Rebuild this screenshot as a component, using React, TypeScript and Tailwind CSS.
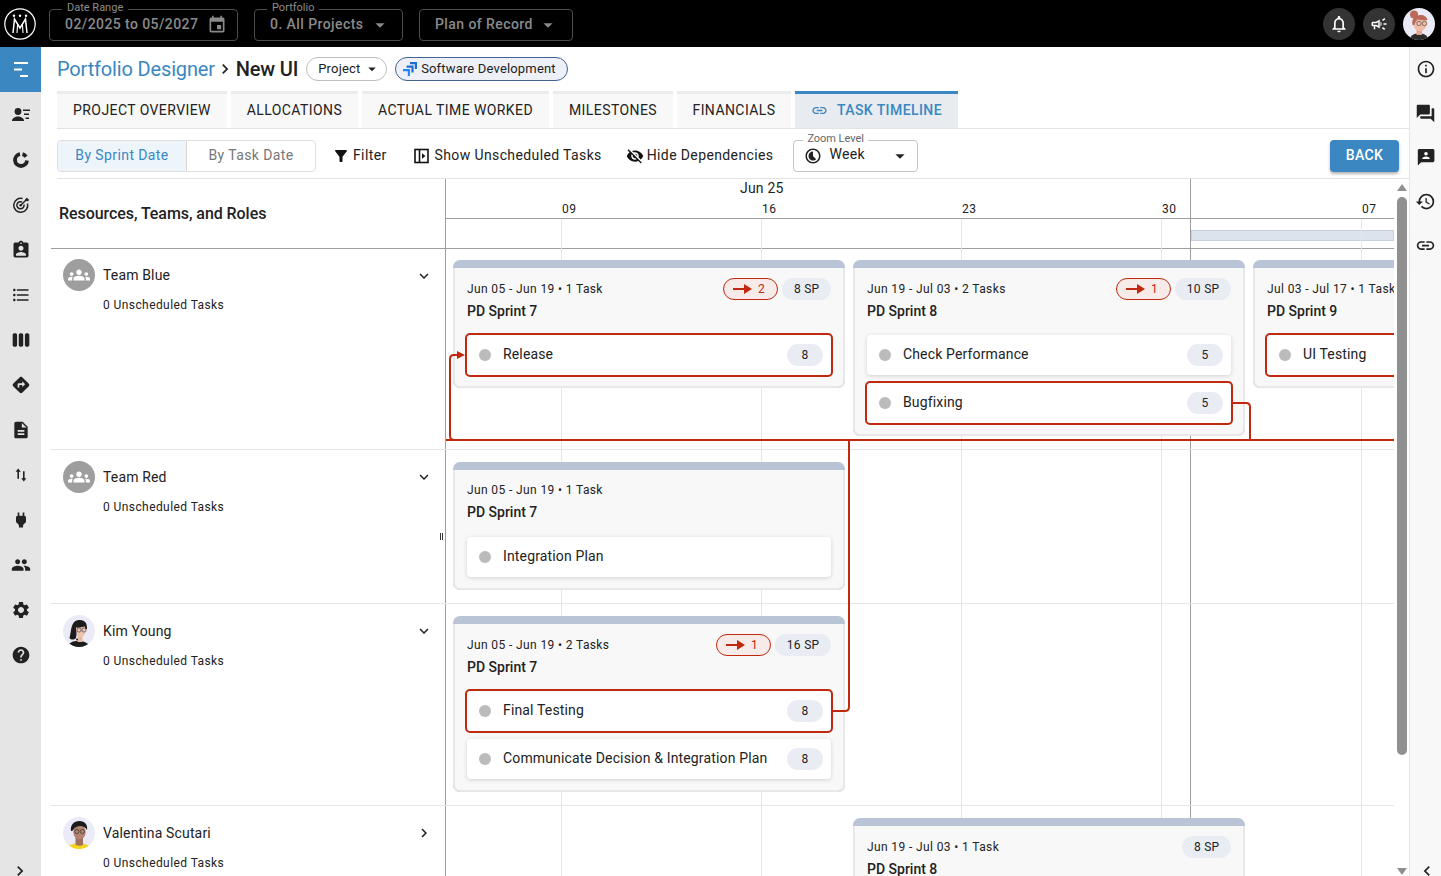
import React from "react";
import {
  MdArrowDropDown, MdEvent, MdNotificationsNone, MdOutlineCampaign, MdOutlineInfo, MdForum, MdHistory, MdLink,
  MdAssignmentInd, MdFormatListBulleted, MdViewWeek, MdDirections, MdDescription,
  MdPower, MdPeople, MdSettings, MdHelp, MdChevronRight, MdChevronLeft, MdFilterAlt, MdVisibilityOff, MdKeyboardArrowDown, MdGroups,
  MdTimelapse,
} from "react-icons/md";

const RED = "#c0280f";

function Logo() {
  return (
    <svg width="32" height="32" viewBox="0 0 32 32" fill="none" stroke="#fff">
      <circle cx="16" cy="16" r="15.2" strokeWidth="1.2" />
      <path d="M9 25 L10.500 11 L16 20 L21.500 11 L23 25" strokeWidth="1.5" />
      <path d="M13 25 L13.600 16 M19 25 L18.400 16" strokeWidth="1.1" />
      <circle cx="10" cy="7.800" r="1.200" fill="#fff" stroke="none" />
      <circle cx="16" cy="7.800" r="1.200" fill="#fff" stroke="none" />
      <circle cx="22" cy="7.800" r="1.200" fill="#fff" stroke="none" />
    </svg>
  );
}

function JiraIcon() {
  return (
    <svg width="16" height="16" viewBox="0 0 16 16" fill="#1c6ed4">
      <path d="M8 1h7v7h-2.200V3.200H8z" />
      <path d="M4.600 4.500h7v7H9.400V6.700H4.600z" fill="#1c6ed4" />
      <path d="M1 8h7v7H5.800V10.200H1z" fill="#2684ff" />
    </svg>
  );
}

function FramesIcon() {
  return (
    <svg width="20" height="20" viewBox="0 0 20 20" fill="none">
      <rect x="3" y="3.500" width="13" height="13" stroke="#111" strokeWidth="1.600" />
      <path d="M7.500 3.500v13" stroke="#111" strokeWidth="1.600" />
      <path d="M10 7.200l3.400 2.800L10 12.800z" fill="#111" />
    </svg>
  );
}

function PersonLines() {
  return (
    <svg width="20" height="20" viewBox="0 0 20 20" fill="#222">
      <circle cx="7" cy="6.500" r="3.400" />
      <path d="M1 16c0-3 3.400-4.600 6-4.600s6 1.600 6 4.600z" />
      <rect x="12" y="4.500" width="7" height="1.500" />
      <rect x="13" y="8.500" width="5" height="1.500" />
      <rect x="14.500" y="12.500" width="3.500" height="1.500" />
    </svg>
  );
}

function Donut() {
  return (
    <svg width="20" height="20" viewBox="0 0 20 20" fill="none" stroke="#222" strokeWidth="3.800">
      <path d="M16 10.500A6 6 0 1 1 9 4.100" />
      <path d="M11.500 4.200A6 6 0 0 1 15 6.700" />
    </svg>
  );
}

function Target() {
  return (
    <svg width="20" height="20" viewBox="0 0 20 20" fill="none" stroke="#222" strokeWidth="1.500">
      <path d="M11.500 3.500A7 7 0 1 0 16.500 8.500" />
      <path d="M11 7A3.600 3.600 0 1 0 13 9.500" />
      <circle cx="9.700" cy="10.300" r="1.300" fill="#222" stroke="none" />
      <path d="M10 10L15.500 4.500" />
      <path d="M14 4.500L16 2.500L17 4L18.500 5L16 6.500Z" fill="#222" stroke="none" />
    </svg>
  );
}

function SwapThin() {
  return (
    <svg width="20" height="20" viewBox="0 0 20 20" fill="#222">
      <path d="M7.200 3.500l2.600 3.200H8v7H6.400v-7H4.600z" />
      <path d="M12.800 16.500l-2.600-3.200H12v-7h1.600v7h1.800z" />
    </svg>
  );
}

function ChatPerson() {
  return (
    <svg width="20" height="20" viewBox="0 0 20 20">
      <path d="M3.400 2h13.400c.9 0 1.600.7 1.600 1.600v10c0 .9-.7 1.600-1.600 1.600H5.200L1.800 18.400V3.600C1.800 2.700 2.500 2 3.400 2z" fill="#222" />
      <circle cx="10" cy="6.800" r="1.800" fill="#fff" />
      <path d="M6.200 12c0-1.600 2.500-2.400 3.800-2.400s3.800.8 3.800 2.400z" fill="#fff" />
    </svg>
  );
}

function MenuLines() {
  return (
    <svg width="14" height="15" viewBox="0 0 14 15" fill="#fff">
      <rect x="0" y="0" width="14" height="2" />
      <rect x="0" y="6.500" width="8" height="2" />
      <rect x="6" y="13" width="8" height="2" />
    </svg>
  );
}

function AvatarRed() {
  return (
    <svg width="32" height="32" viewBox="0 0 32 32">
      <defs><clipPath id="a1"><circle cx="16" cy="16" r="16" /></clipPath></defs>
      <g clipPath="url(#a1)">
        <rect width="32" height="32" fill="#ebebf7" />
        <path d="M7 32c0-5 4-6.500 9-6.500s9 1.500 9 6.500z" fill="#2b2b2b" />
        <rect x="13.500" y="20" width="5.500" height="7" fill="#e3a78e" />
        <ellipse cx="17" cy="15.500" rx="7" ry="7.500" fill="#f0bda6" />
        <path d="M9.500 17c-1.500-6 2.500-10 8-10 3.600 0 6.500 2 7 5-3 .5-7 .3-10-.8-.6 2-2.800 3-3 5.800z" fill="#bc6a57" />
        <circle cx="11" cy="6.500" r="4" fill="#bc6a57" />
        <circle cx="16" cy="15.500" r="2.200" fill="none" stroke="#555" strokeWidth=".7" />
        <circle cx="21.500" cy="15.500" r="2.200" fill="none" stroke="#555" strokeWidth=".7" />
      </g>
    </svg>
  );
}

function AvatarKim() {
  return (
    <svg width="32" height="32" viewBox="0 0 32 32">
      <defs><clipPath id="a2"><circle cx="16" cy="16" r="16" /></clipPath></defs>
      <g clipPath="url(#a2)">
        <rect width="32" height="32" fill="#ebebf7" />
        <path d="M5 32c1-5 5-6 10-6s10 1 12 6z" fill="#1c1c1c" />
        <rect x="14.500" y="20" width="5" height="7" fill="#e8bba5" />
        <path d="M6.500 23c2-7 1-17 9-18 6-.8 9 3 8.500 9l-10 1-1 8c-2 2-5 2-6.500 0z" fill="#1c1c1c" />
        <path d="M13 12.500c3 .5 6-.5 9-1 1 5 .5 10-4 10.500-3.500.4-5-4-5-9.500z" fill="#eec4ae" />
        <circle cx="16" cy="15" r="2.100" fill="none" stroke="#555" strokeWidth=".8" />
        <circle cx="21" cy="15" r="2.100" fill="none" stroke="#555" strokeWidth=".8" />
        <circle cx="14" cy="24.500" r="1" fill="#222" />
      </g>
    </svg>
  );
}

function AvatarVal() {
  return (
    <svg width="32" height="32" viewBox="0 0 32 32">
      <defs><clipPath id="a3"><circle cx="16" cy="16" r="16" /></clipPath></defs>
      <g clipPath="url(#a3)">
        <rect width="32" height="32" fill="#ebebf7" />
        <path d="M4 32c1-4 5-5.500 12-5.500s11 1.500 12 5.500z" fill="#f6d31b" />
        <path d="M12.500 20h7.500v8c-2 1-5.500 1-7.500-.5z" fill="#a0715f" />
        <ellipse cx="16.500" cy="15" rx="6.200" ry="7.500" fill="#b58270" />
        <path d="M8 14C7 8 11 4 16.500 4S25 8 24 13c-2-3-4-4-6.500-4-3 0-6 1.500-7 3.500-.5 1-1.500 1.500-2.500 1.500z" fill="#1b1b1b" />
        <circle cx="13.800" cy="14.500" r="2.100" fill="none" stroke="#333" strokeWidth=".7" />
        <circle cx="19.400" cy="14.500" r="2.100" fill="none" stroke="#333" strokeWidth=".7" />
      </g>
    </svg>
  );
}

function TopField({ label, value, icon, className }: { label?: string; value: string; icon: React.ReactNode; className: string }) {
  return (
    <div className={`relative flex h-8 items-center rounded border border-[#4d4d4d] px-[15px] text-[14px] font-medium tracking-[0.42px] text-[#8a8a8a] ${className}`}>
      {label && (
        <span className="absolute -top-[9px] left-[12px] bg-black px-[5px] text-[11px] leading-[14px] tracking-normal font-normal text-[#8c8c8c]">{label}</span>
      )}
      <span className="flex-1 whitespace-nowrap">{value}</span>
      {icon}
    </div>
  );
}

const leftIcons: React.ReactNode[] = [
  <PersonLines />,
  <Donut />,
  <Target />,
  <MdAssignmentInd size={20} className="text-[#222]" />,
  <MdFormatListBulleted size={20} className="text-[#222]" />,
  <MdViewWeek size={20} className="text-[#222]" />,
  <MdDirections size={20} className="text-[#222]" />,
  <MdDescription size={20} className="text-[#222]" />,
  <SwapThin />,
  <MdPower size={20} className="text-[#222]" />,
  <MdPeople size={20} className="text-[#222]" />,
  <MdSettings size={20} className="text-[#222]" />,
  <MdHelp size={20} className="text-[#222]" />,
];

function LeftRail() {
  return (
    <aside className="relative flex w-[41px] shrink-0 flex-col items-center bg-[#e5e5e5]">
      <div className="flex h-[45px] w-full items-center justify-center bg-[#3a87c2]"><MenuLines /></div>
      {leftIcons.map((ic, i) => (
        <div key={i} className="flex h-[45px] w-full items-center justify-center">{ic}</div>
      ))}
      <MdChevronRight size={20} className="absolute bottom-[-5px] left-[10px] text-[#222]" />
    </aside>
  );
}

function RightRail() {
  const cls = "flex h-[44px] w-full items-center justify-center text-[#222]";
  return (
    <aside className="relative flex w-[32px] shrink-0 flex-col items-center border-l border-[#e6e6e6] bg-[#f8f8f8] pt-0">
      <div className={cls}><MdOutlineInfo size={20} /></div>
      <div className={cls}><MdForum size={21} /></div>
      <div className={cls}><ChatPerson /></div>
      <div className={cls}><MdHistory size={21} /></div>
      <div className={cls}><MdLink size={21} /></div>
      <MdChevronLeft size={20} className="absolute bottom-[-5px] left-[7px] text-[#222]" />
    </aside>
  );
}

const tabs = [
  ["PROJECT OVERVIEW", "w-[170px]"],
  ["ALLOCATIONS", "w-[127px]"],
  ["ACTUAL TIME WORKED", "w-[187px]"],
  ["MILESTONES", "w-[120px]"],
  ["FINANCIALS", "w-[114px]"],
];

function Tabs() {
  return (
    <div className="ml-4 flex h-[38px] gap-1 border-b border-[#e3e3e3]">
      {tabs.map(([t, w]) => (
        <div key={t} className={`flex h-[37px] items-center justify-center border-t-[3px] border-[#ececec] bg-[#f8f8f8] pb-[2px] text-[14px] tracking-[0.42px] text-[#222] ${w}`}>{t}</div>
      ))}
      <div className="flex h-[37px] w-[163px] items-center justify-center gap-[9px] border-t-[3px] border-[#3a87c2] bg-[#e8ebf0] pb-[2px] text-[14px] font-medium tracking-[0.42px] text-[#3a87c2]">
        <MdLink size={17} />
        TASK TIMELINE
      </div>
    </div>
  );
}

function Toolbar() {
  const item = "flex items-center text-[14px] tracking-[0.38px] text-[#222] whitespace-nowrap";
  return (
    <div className="ml-4 flex h-[50px] items-center border-b border-[#e3e3e3] pr-[10px] pt-[4px]">
      <div className="flex h-8 w-[259px] overflow-hidden rounded border border-[#dfdfdf] text-[14px] tracking-[0.4px]">
        <div className="flex w-[129px] items-center justify-center border-r border-[#d5d5d5] bg-[#eef5fa] text-[#3a87c2]">By Sprint Date</div>
        <div className="flex flex-1 items-center justify-center text-[#777]">By Task Date</div>
      </div>
      <div className={`${item} ml-[16px] gap-[3px]`}><MdFilterAlt size={18} className="text-[#111]" />Filter</div>
      <div className={`${item} ml-[25px] gap-[3px]`}><FramesIcon />Show Unscheduled Tasks</div>
      <div className={`${item} ml-[24px] gap-[3px]`}><MdVisibilityOff size={18} className="text-[#111]" />Hide Dependencies</div>
      <div className="relative ml-[20px] flex h-8 w-[125px] items-center rounded border border-[#c4c4c4] pl-[10px] pr-[12px]">
        <span className="absolute -top-[9px] left-[9px] bg-white px-[4px] text-[11px] leading-[14px] tracking-[-0.05px] text-[#666]">Zoom Level</span>
        <MdTimelapse size={18} className="-scale-x-100 text-[#222]" />
        <span className="ml-[7px] mb-[3px] flex-1 text-[14px] tracking-[0.3px] text-[#222]">Week</span>
        <MdArrowDropDown size={22} className="text-[#222] -mr-[6px]" />
      </div>
      <div className="ml-auto flex h-8 w-[69px] items-center justify-center rounded bg-[#3a87c2] text-[14px] font-medium tracking-[0.4px] text-white shadow-[0_2px_3px_rgba(0,0,0,0.3)]">BACK</div>
    </div>
  );
}

function Pill({ children, className }: { children: React.ReactNode; className?: string }) {
  return <span className={`flex items-center justify-center rounded-full bg-[#e9edf3] text-[12px] tracking-[0.3px] text-[#222] ${className ?? ""}`}>{children}</span>;
}

function DepBadge({ n }: { n: number }) {
  return (
    <span className="flex h-[22px] w-[55px] items-center justify-center gap-[6px] rounded-full border border-[#c0280f] bg-[#f7ebe9] pr-[4px] text-[12px] text-[#c0280f]">
      <svg width="19" height="10" viewBox="0 0 19 10" fill="#c0280f"><rect x="0" y="4" width="13" height="2" /><path d="M11 0l8 5-8 5z" /></svg>
      {n}
    </span>
  );
}

type TaskT = { name: string; sp?: number; dep?: boolean };

function Task({ name, sp, dep }: TaskT) {
  return (
    <div className={dep ? "-mx-[2px] -my-[2px] flex h-[44px] items-center rounded-[5px] border-2 border-[#c0280f] bg-white pl-[12px] pr-[8px]" : "flex h-[40px] items-center rounded-[4px] bg-white pl-[12px] pr-[8px] shadow-[0_1px_4px_rgba(0,0,0,0.16)]"}>
      <span className="h-3 w-3 shrink-0 rounded-full bg-[#bbbbbb]" />
      <span className="ml-3 mb-[2px] flex-1 whitespace-nowrap text-[14px] tracking-[0.15px] text-[#222]">{name}</span>
      {sp != null && <Pill className="h-[22px] w-9">{sp}</Pill>}
    </div>
  );
}

type CardProps = { dates: string; title: string; dep?: number; sp?: string; tasks?: TaskT[]; h: number; className: string; compact?: boolean };

function Card({ dates, title, dep, sp, tasks = [], h, className, compact }: CardProps) {
  return (
    <div className={`absolute flex w-[392px] flex-col overflow-hidden rounded-[7px] bg-[#b9c4d6] pt-2 ${className}`} style={{ height: h }}>
      <div className="flex-1 overflow-hidden rounded-b-[7px] border-2 border-t-0 border-[#e8e8e8] bg-[#f8f8f8]">
        <div className={`flex h-[21px] items-center justify-between pl-3 pr-3 ${compact ? "mt-[9px]" : "mt-[10px]"}`}>
          <span className="whitespace-nowrap text-[12px] tracking-[0.38px] text-[#222]">{dates}</span>
          <span className="flex shrink-0 gap-1">
            {dep != null && <DepBadge n={dep} />}
            {sp && <Pill className="h-[22px] px-[11.500px]">{sp}</Pill>}
          </span>
        </div>
        <div className="mt-[1px] pl-3 text-[14px] font-medium leading-[22px] text-[#222]">{title}</div>
        <div className={`flex flex-col gap-2 px-3 ${compact ? "mt-[14px]" : "mt-[13px]"}`}>
          {tasks.map((t) => <Task key={t.name} {...t} />)}
        </div>
      </div>
    </div>
  );
}

function Row({ name, avatar, open = true, h, cards, last, pt = "pt-[11px]" }: { name: string; avatar: React.ReactNode; open?: boolean; h: string; cards: React.ReactNode; last?: boolean; pt?: string }) {
  return (
    <div className={`flex ${h} ${last ? "" : "border-b border-[#e6e6e6]"}`}>
      <div className={`relative w-[395px] shrink-0 border-r border-[#9e9e9e] pl-3 ${pt}`}>
        <div className="flex items-center gap-2">
          {avatar}
          <span className="ml-0 text-[14px] tracking-[0.15px] text-[#222]">{name}</span>
        </div>
        <div className="ml-[40px] mt-[5px] text-[12px] tracking-[0.42px] text-[#222]">0 Unscheduled Tasks</div>
        <span className="absolute right-[12px] top-[18px] text-[#222]">
          {open ? <MdKeyboardArrowDown size={18} /> : <MdChevronRight size={18} />}
        </span>
      </div>
      <div className="relative flex-1">{cards}</div>
    </div>
  );
}

function TeamAvatar() {
  return (
    <span className="flex h-8 w-8 items-center justify-center rounded-full bg-[#9e9e9e] text-white"><MdGroups size={22} /></span>
  );
}

function Timeline() {
  return (
    <div className="relative ml-[10px] flex min-h-0 flex-1 flex-col overflow-hidden pr-[15px]">
      {/* header */}
      <div className="flex h-[70px] shrink-0 border-b border-[#9e9e9e]">
        <div className="flex w-[395px] shrink-0 items-center border-r border-[#9e9e9e] pl-2 pt-[1px] text-[16px] font-medium tracking-[-0.07px] text-[#222]">Resources, Teams, and Roles</div>
        <div className="relative flex-1">
          <div className="flex h-[40px] flex-col border-b border-[#9e9e9e]">
            <div className="h-[20px] pl-[294px] pt-[0px] text-[14px] leading-[18px] tracking-[0.2px] text-[#222]">Jun 25</div>
            <div className="relative h-[20px] text-[12px] tracking-[0.5px] text-[#222]">
              <span className="absolute left-[116px] top-[1px]">09</span>
              <span className="absolute left-[316px] top-[1px]">16</span>
              <span className="absolute left-[516px] top-[1px]">23</span>
              <span className="absolute left-[716px] top-[1px]">30</span>
              <span className="absolute left-[916px] top-[1px]">07</span>
            </div>
          </div>
          <div className="ml-[745px] mt-[11px] h-[11px] border border-[#c6d0de] bg-[#dde3ec]" />
        </div>
      </div>
      {/* grid lines */}
      <div className="pointer-events-none absolute inset-0">
        <div className="absolute left-[510px] top-[40px] bottom-0 w-px bg-[#e6e6e6]" />
        <div className="absolute left-[710px] top-[40px] bottom-0 w-px bg-[#e6e6e6]" />
        <div className="absolute left-[910px] top-[40px] bottom-0 w-px bg-[#e6e6e6]" />
        <div className="absolute left-[1110px] top-[40px] bottom-0 w-px bg-[#e6e6e6]" />
        <div className="absolute left-[1310px] top-[40px] bottom-0 w-px bg-[#e6e6e6]" />
        <div className="absolute left-[1139px] top-0 bottom-0 w-px bg-[#9e9e9e]" />
      </div>
      <div className="relative flex-1 overflow-hidden">
        <Row name="Team Blue" pt="pt-[10px]" avatar={<TeamAvatar />} h="h-[201px]" cards={
          <>
            <Card className="left-[7px] top-[11px]" h={128} dates="Jun 05 - Jun 19 • 1 Task" title="PD Sprint 7" dep={2} sp="8 SP" tasks={[{ name: "Release", sp: 8, dep: true }]} />
            <Card className="left-[407px] top-[11px]" h={176} dates="Jun 19 - Jul 03 • 2 Tasks" title="PD Sprint 8" dep={1} sp="10 SP" tasks={[{ name: "Check Performance", sp: 5 }, { name: "Bugfixing", sp: 5, dep: true }]} />
            <Card className="left-[807px] top-[11px]" h={128} dates="Jul 03 - Jul 17 • 1 Task" title="PD Sprint 9" tasks={[{ name: "UI Testing", dep: true }]} />
          </>
        } />
        <Row name="Team Red" avatar={<TeamAvatar />} h="h-[154px]" cards={
          <Card compact className="left-[7px] top-[12px]" h={128} dates="Jun 05 - Jun 19 • 1 Task" title="PD Sprint 7" tasks={[{ name: "Integration Plan" }]} />
        } />
        <Row name="Kim Young" avatar={<AvatarKim />} h="h-[202px]" cards={
          <Card className="left-[7px] top-[12px]" h={176} dates="Jun 05 - Jun 19 • 2 Tasks" title="PD Sprint 7" dep={1} sp="16 SP" tasks={[{ name: "Final Testing", sp: 8, dep: true }, { name: "Communicate Decision & Integration Plan", sp: 8 }]} />
        } />
        <Row name="Valentina Scutari" avatar={<AvatarVal />} open={false} h="h-[120px]" last cards={
          <Card className="left-[407px] top-[12px]" h={128} dates="Jun 19 - Jul 03 • 1 Task" title="PD Sprint 8" sp="8 SP" />
        } />
        {/* connectors */}
        <svg className="pointer-events-none absolute left-[394px] top-0" width="950" height="627" fill="none" stroke={RED} strokeWidth="2">
          <path d="M1 191 H949" />
          <path d="M10 191 Q5 191 5 187 V110 Q5 106 9 106 H14" />
          <path d="M12 102 L20 106 L12 110 Z" fill={RED} stroke="none" />
          <path d="M788 154 H801 Q805 154 805 158 V191" />
          <path d="M388 462 H400 Q404 462 404 458 V191" />
        </svg>
      </div>
      <div className="absolute left-[389px] top-[354px] flex gap-px">
        <span className="h-[7px] w-px bg-[#333]" />
        <span className="h-[7px] w-px bg-[#333]" />
      </div>
      {/* scrollbar */}
      <div className="absolute right-0 top-0 h-full w-[15px]">
        <div className="absolute left-[3px] top-[5px] h-0 w-0 border-x-[5px] border-b-[7px] border-x-transparent border-b-[#909090]" />
        <div className="absolute left-[3px] top-[18px] h-[558px] w-[10px] rounded-full bg-[#909090]" />
        <div className="absolute left-[3px] bottom-[1px] h-0 w-0 border-x-[5px] border-t-[7px] border-x-transparent border-t-[#909090]" />
      </div>
    </div>
  );
}

export default function App() {
  return (
    <div className="flex h-[876px] w-[1441px] flex-col overflow-hidden bg-white font-['Roboto',sans-serif]">
      <header className="flex h-[47px] shrink-0 items-center bg-black">
        <div className="ml-[4px] flex w-[32px]"><Logo /></div>
        <div className="ml-[13px] mt-[2px] flex gap-4">
          <TopField className="w-[189px]" label="Date Range" value="02/2025 to 05/2027" icon={<MdEvent size={20} className="-mr-[5px]" />} />
          <TopField className="w-[149px]" label="Portfolio" value="0. All Projects" icon={<MdArrowDropDown size={22} className="-mr-[4px]" />} />
          <TopField className="w-[154px]" value="Plan of Record" icon={<MdArrowDropDown size={22} className="-mr-[2px]" />} />
        </div>
        <div className="ml-auto mr-[6px] flex items-center gap-2">
          <span className="flex h-8 w-8 items-center justify-center rounded-full bg-[#333] text-white"><MdNotificationsNone size={20} /></span>
          <span className="flex h-8 w-8 items-center justify-center rounded-full bg-[#333] text-white"><MdOutlineCampaign size={18} /></span>
          <AvatarRed />
        </div>
      </header>
      <div className="flex min-h-0 flex-1">
        <LeftRail />
        <main className="flex min-w-0 flex-1 flex-col">
          <div className="ml-4 flex h-[44px] items-center">
            <span className="text-[20px] tracking-[-0.16px] text-[#3a87c2]">Portfolio Designer</span>
            <MdChevronRight size={20} className="mr-[1px] text-[#222]" />
            <span className="text-[20px] font-medium tracking-[-0.2px] text-[#222]">New UI</span>
            <span className="ml-2 flex h-6 w-[81px] items-center rounded-full border border-[#bdbdbd] pl-[11px] text-[13px] tracking-[0.2px] text-[#222]">Project<MdArrowDropDown size={18} className="ml-[2px]" /></span>
            <span className="ml-2 flex h-6 w-[173px] items-center gap-[3px] rounded-full border border-[#40638f] bg-[#eef0f7] pl-[6px] text-[13px] tracking-[0.17px] text-[#222]"><JiraIcon />Software Development</span>
          </div>
          <Tabs />
          <Toolbar />
          <Timeline />
        </main>
        <RightRail />
      </div>
    </div>
  );
}
